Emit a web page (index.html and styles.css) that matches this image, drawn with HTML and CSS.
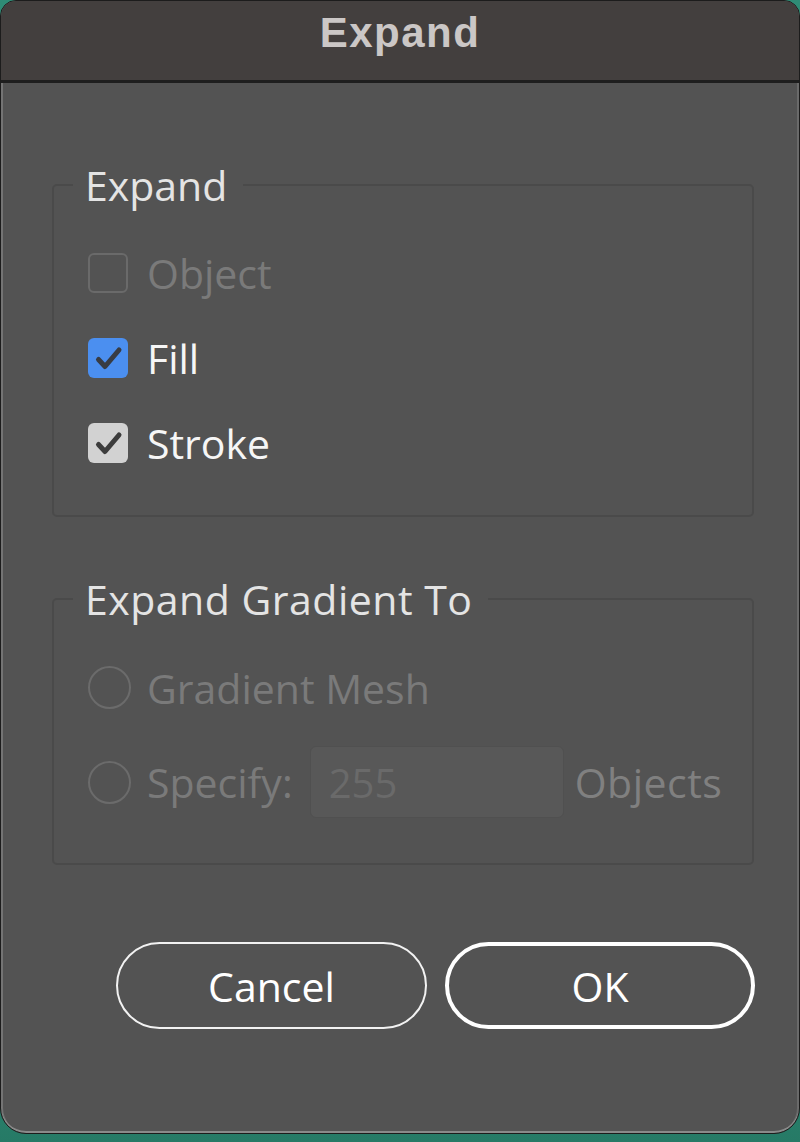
FILE: index.html
```html
<!DOCTYPE html>
<html lang="en">
<head>
<meta charset="utf-8">
<title>Expand</title>
<link rel="stylesheet" href="styles.css">
</head>
<body>
<div class="dialog">
  <div class="titlebar">Expand</div>
  <div class="content">
    <fieldset class="group group-expand">
      <legend class="legend">Expand</legend>
      <div class="rows rows-expand">
        <div class="row">
          <span class="checkbox checkbox-off"></span>
          <span class="label label-disabled">Object</span>
        </div>
        <div class="row">
          <span class="checkbox checkbox-blue">
            <svg viewBox="0 0 40 40" width="40" height="40"><path d="M10.5 21.5 L17 28.5 L31 12" fill="none" stroke="#383c44" stroke-width="5" stroke-linecap="round" stroke-linejoin="round"/></svg>
          </span>
          <span class="label">Fill</span>
        </div>
        <div class="row">
          <span class="checkbox checkbox-gray">
            <svg viewBox="0 0 40 40" width="40" height="40"><path d="M10.5 21.5 L17 28.5 L31 12" fill="none" stroke="#3c3c3c" stroke-width="5" stroke-linecap="round" stroke-linejoin="round"/></svg>
          </span>
          <span class="label">Stroke</span>
        </div>
      </div>
    </fieldset>

    <fieldset class="group group-gradient">
      <legend class="legend">Expand Gradient To</legend>
      <div class="rows rows-gradient">
        <div class="row row-mesh">
          <span class="radio"></span>
          <span class="label label-disabled">Gradient Mesh</span>
        </div>
        <div class="row row-specify">
          <span class="radio"></span>
          <span class="label label-disabled">Specify:</span>
          <span class="input">255</span>
          <span class="label label-objects">Objects</span>
        </div>
      </div>
    </fieldset>

    <div class="buttons">
      <button class="btn btn-cancel">Cancel</button>
      <button class="btn btn-ok">OK</button>
    </div>
  </div>
</div>
</body>
</html>
```

FILE: styles.css
```css
html, body {
  margin: 0;
  padding: 0;
}

body {
  width: 800px;
  height: 1142px;
  background: linear-gradient(180deg, #2f8c76 0%, #2b8671 90%, #267a66 100%);
  overflow: hidden;
  font-family: "Open Sans", "Noto Sans", sans-serif;
}

.dialog {
  box-sizing: border-box;
  margin: 0;
  width: 800px;
  height: 1134px;
  background: #535353;
  border: 1px solid #1c1c1c;
  border-radius: 16px 16px 26px 26px;
  box-shadow: inset 0 -2px 0 #8a8a8a, inset 2px 0 0 #747474, inset -2px 0 0 #6a6a6a;
  overflow: hidden;
}

.titlebar {
  box-sizing: border-box;
  height: 82px;
  padding-top: 8px;
  background: #433f3e;
  border-bottom: 3px solid #1e1e1e;
  text-align: center;
  font-family: "Liberation Sans", Arial, sans-serif;
  font-weight: 700;
  font-size: 42px;
  line-height: 48px;
  letter-spacing: 1.5px;
  color: #cbc7c6;
}

.content {
  display: flex;
  flex-direction: column;
  padding-top: 78px;
}

.group {
  box-sizing: border-box;
  margin: 0 0 0 51px;
  width: 702px;
  padding: 0;
  border: 2px solid #4a4a4a;
  border-radius: 5px;
  min-width: 0;
}

.group-gradient {
  margin-top: 58px;
}

.legend {
  margin-left: 19px;
  padding: 0 16px 0 12px;
  font-size: 41px;
  line-height: 48px;
  color: #e4e4e4;
}

.group-gradient .legend {
  letter-spacing: 0.5px;
}

.rows {
  display: flex;
  flex-direction: column;
  padding-left: 34px;
}

.rows-expand {
  padding-top: 21px;
  padding-bottom: 30px;
}

.rows-gradient {
  padding-top: 22px;
  padding-bottom: 29px;
}

.row {
  display: flex;
  align-items: center;
  height: 85px;
}

.row-specify {
  height: 104px;
}

.label {
  font-size: 41px;
  line-height: 56px;
  color: #f6f6f6;
  margin-left: 19px;
}

.label-disabled {
  color: #7a7a7a;
}

.radio + .label {
  margin-left: 16px;
}

.label-objects {
  margin-left: 11px;
  color: #808080;
  letter-spacing: 0.5px;
}

.checkbox {
  box-sizing: border-box;
  display: block;
  width: 40px;
  height: 40px;
  border-radius: 6px;
  flex: none;
}

.checkbox svg {
  display: block;
}

.checkbox-off {
  border: 2px solid #6a6a6a;
}

.checkbox-blue {
  background: #4b8ff0;
}

.checkbox-gray {
  background: #d2d2d2;
}

.radio {
  box-sizing: border-box;
  display: block;
  width: 43px;
  height: 43px;
  border: 2px solid #6b6b6b;
  border-radius: 50%;
  flex: none;
}

.input {
  box-sizing: border-box;
  display: flex;
  align-items: center;
  width: 254px;
  height: 72px;
  margin-left: 17px;
  padding-left: 18px;
  background: #585858;
  border: 1px solid #505050;
  border-radius: 6px;
  font-size: 40px;
  color: #6a6a6a;
}

.buttons {
  display: flex;
  gap: 18px;
  margin-top: 77px;
  padding-left: 115px;
}

.btn {
  box-sizing: border-box;
  width: 311px;
  height: 87px;
  border-radius: 44px;
  background: transparent;
  font-family: "Open Sans", "Noto Sans", sans-serif;
  font-size: 41px;
  color: #ffffff;
  padding: 0;
  cursor: pointer;
}

.btn-cancel {
  border: 2px solid #f2f2f2;
}

.btn-ok {
  width: 310px;
  border: 4px solid #ffffff;
}
```
